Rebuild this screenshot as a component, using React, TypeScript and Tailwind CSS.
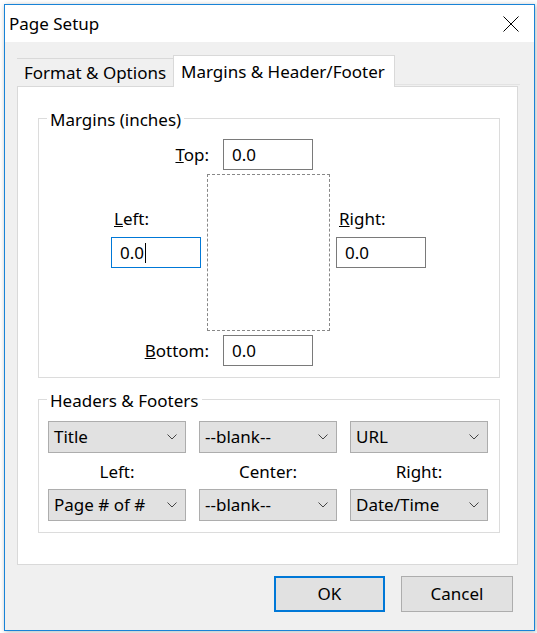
import React from 'react';

const font = "font-['Noto_Sans',sans-serif]";

function Field({ value, focused }: { value: string; focused?: boolean }) {
  return (
    <div
      className={`flex h-[31px] w-[90px] items-center bg-white pl-[8px] text-[17px] ${
        focused ? 'border border-[#0078d7]' : 'border border-[#7a7a7a]'
      }`}
    >
      <span>{value}</span>
      {focused && <span className="ml-px h-[20px] w-px bg-black" />}
    </div>
  );
}

function Chevron() {
  return (
    <svg width="10" height="6" viewBox="0 0 10 6" className="shrink-0">
      <polyline points="0.5,0.5 5,5 9.5,0.5" fill="none" stroke="#444" strokeWidth="1" />
    </svg>
  );
}

function Select({ value }: { value: string }) {
  return (
    <div className="flex h-[32px] items-center justify-between border border-[#adadad] bg-[#e1e1e1] pl-[5px] pr-[8px] text-[17px]">
      <span>{value}</span>
      <Chevron />
    </div>
  );
}

export default function App() {
  return (
    <div className={`h-[633px] w-[537px] bg-white pl-[4px] pt-[4px] text-black ${font}`}>
      <div className="flex h-[627px] w-[531px] flex-col border border-[#1883d7] bg-[#f0f0f0] shadow-[1px_1px_5px_rgba(0,0,0,0.3)]">
        {/* Title bar */}
        <div className="flex h-[37px] items-center justify-between bg-white pl-[4px] pr-[15px]">
          <span className="text-[17px]">Page Setup</span>
          <svg width="16" height="16" viewBox="0 0 16 16">
            <path d="M0.5 0.5 L15.5 15.5 M15.5 0.5 L0.5 15.5" stroke="#000" strokeWidth="1" />
          </svg>
        </div>

        <div className="flex flex-1 flex-col">
          {/* Tabs */}
          <div className="ml-[12px] mt-[13px] flex h-[31px] items-start">
            <div className="mt-[3px] flex h-[28px] w-[156px] items-center justify-center border-t border-[#d9d9d9] pt-px text-[17px]">
              Format &amp; Options
            </div>
            <div className="relative z-10 flex h-[32px] w-[222px] items-center border border-b-0 border-[#d9d9d9] bg-white pl-[7px] text-[17px]">
              Margins &amp; Header/Footer
            </div>
            <div className="mt-[29px] h-px w-[125px] bg-[#e3e3e3]" />
          </div>

          {/* Panel */}
          <div className="ml-[12px] h-[479px] w-[501px] border border-[#d9d9d9] bg-white">
            <fieldset className="ml-[20px] mt-[18px] w-[462px] border border-[#dcdcdc] pb-[11px]">
              <legend className="ml-[8px] px-[3px] pt-[4px] text-[17px] leading-[22px]">Margins (inches)</legend>

              <div className="ml-[72px] w-[315px]">
                <div className="mt-[8px] flex items-center">
                  <span className="w-[98px] text-right text-[17px]">
                    <u>T</u>op:
                  </span>
                  <div className="ml-[14px]">
                    <Field value="0.0" />
                  </div>
                </div>

                <div className="mt-[4px] grid grid-cols-[90px_123px_90px] gap-x-[6px]">
                  <div className="flex flex-col pt-[34px]">
                    <span className="pl-[3px] text-[17px] leading-[22px]">
                      <u>L</u>eft:
                    </span>
                    <div className="mt-[7px]">
                      <Field value="0.0" focused />
                    </div>
                  </div>
                  <div className="h-[157px] border border-dashed border-[#888]" />
                  <div className="flex flex-col pt-[34px]">
                    <span className="pl-[3px] text-[17px] leading-[22px]">
                      <u>R</u>ight:
                    </span>
                    <div className="mt-[7px]">
                      <Field value="0.0" />
                    </div>
                  </div>
                </div>

                <div className="mt-[4px] flex items-center">
                  <span className="w-[98px] text-right text-[17px]">
                    <u>B</u>ottom:
                  </span>
                  <div className="ml-[14px]">
                    <Field value="0.0" />
                  </div>
                </div>
              </div>
            </fieldset>

            <fieldset className="ml-[20px] mt-[8px] w-[462px] border border-[#dcdcdc] pb-[11px] pl-[9px]">
              <legend className="ml-[-1px] px-[3px] pt-[4px] text-[17px] leading-[22px]">Headers &amp; Footers</legend>
              <div className="mt-[9px] grid grid-cols-[138px_138px_138px] gap-x-[13px]">
                <Select value="Title" />
                <Select value="--blank--" />
                <Select value="URL" />
                <div className="flex h-[36px] items-center justify-center pt-[2px] text-[17px]">Left:</div>
                <div className="flex h-[36px] items-center justify-center pt-[2px] text-[17px]">Center:</div>
                <div className="flex h-[36px] items-center justify-center pt-[2px] text-[17px]">Right:</div>
                <Select value="Page # of #" />
                <Select value="--blank--" />
                <Select value="Date/Time" />
              </div>
            </fieldset>
          </div>

          {/* Buttons */}
          <div className="mr-[21px] mt-[11px] flex justify-end gap-[16px]">
            <button className="h-[36px] w-[111px] border-2 border-[#0078d7] bg-[#e1e1e1] text-[17px]">OK</button>
            <button className="h-[36px] w-[112px] border border-[#adadad] bg-[#e1e1e1] text-[17px]">Cancel</button>
          </div>
        </div>
      </div>
    </div>
  );
}
